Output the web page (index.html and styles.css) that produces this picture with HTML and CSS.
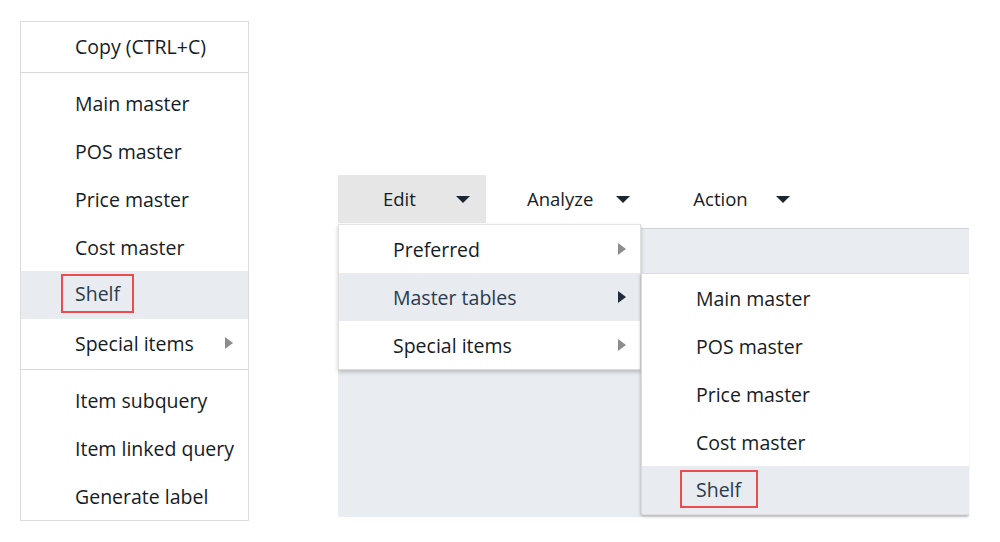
FILE: index.html
```html
<!DOCTYPE html>
<html lang="en">
<head>
<meta charset="utf-8">
<title>Menus</title>
<link rel="stylesheet" href="styles.css">
</head>
<body>
<div class="page">
  <ul class="ctx-menu">
    <li class="item">Copy (CTRL+C)</li>
    <li class="sep"></li>
    <li class="item">Main master</li>
    <li class="item">POS master</li>
    <li class="item">Price master</li>
    <li class="item">Cost master</li>
    <li class="item active"><span class="mark mark-left">Shelf</span></li>
    <li class="item has-sub">Special items<span class="arrow"></span></li>
    <li class="sep"></li>
    <li class="item">Item subquery</li>
    <li class="item">Item linked query</li>
    <li class="item">Generate label</li>
  </ul>

  <div class="app">
    <div class="toolbar">
      <div class="tb-item tb-edit"><span>Edit</span><span class="caret"></span></div>
      <div class="tb-item tb-analyze"><span>Analyze</span><span class="caret"></span></div>
      <div class="tb-item tb-action"><span>Action</span><span class="caret"></span></div>
    </div>
    <div class="panel"></div>

    <ul class="dropdown">
      <li class="item has-sub">Preferred<span class="arrow"></span></li>
      <li class="item has-sub active">Master tables<span class="arrow dark"></span></li>
      <li class="item has-sub">Special items<span class="arrow"></span></li>
    </ul>

    <ul class="submenu">
      <li class="item">Main master</li>
      <li class="item">POS master</li>
      <li class="item">Price master</li>
      <li class="item">Cost master</li>
      <li class="item active"><span class="mark mark-right">Shelf</span></li>
    </ul>
  </div>
</div>
</body>
</html>
```

FILE: styles.css
```css
* { box-sizing: border-box; }

html, body {
  margin: 0;
  padding: 0;
  background: #ffffff;
}

body {
  font-family: "Open Sans", "Noto Sans", "Liberation Sans", sans-serif;
  font-size: 19.5px;
  color: #151c26;
  width: 1000px;
  height: 542px;
  overflow: hidden;
}

ul { list-style: none; margin: 0; padding: 0; }

.page {
  display: flex;
  align-items: flex-start;
  padding: 21px 0 0 20px;
}

/* ---------- left context menu ---------- */
.ctx-menu {
  width: 229px;
  border: 1px solid #dcdcdc;
  background: #fff;
}

.item {
  height: 48px;
  display: flex;
  align-items: center;
  padding-left: 54px;
  white-space: nowrap;
}

.item.active {
  background: #e8ebef;
  color: #2a3a4c;
}

.ctx-menu .has-sub {
  justify-content: space-between;
  padding-right: 15px;
}

.sep {
  height: 1px;
  background: #d8d8d8;
  margin: 2px 0 6px;
}

.arrow {
  width: 0;
  height: 0;
  border-top: 6px solid transparent;
  border-bottom: 6px solid transparent;
  border-left: 8px solid #8c8c8c;
}
.arrow.dark { border-left-color: #1f2d3d; }

.mark {
  display: inline-flex;
  align-items: center;
  border: 2px solid #ea4c4f;
}
.mark-left {
  height: 39px;
  padding: 0 12px;
  margin-left: -14px;
  margin-top: -3px;
}
.mark-right {
  height: 38px;
  padding: 0 15px 0 14px;
  margin-left: -16px;
  margin-top: -2px;
}

/* ---------- app area ---------- */
.app {
  position: relative;
  margin-left: 89px;
  margin-top: 154px;
  width: 631px;
}

.toolbar {
  display: flex;
  height: 48px;
  align-items: stretch;
  font-size: 18.5px;
}

.tb-item {
  display: flex;
  align-items: center;
  padding-bottom: 1px;
}

.tb-edit {
  width: 148px;
  background: #e6e6e6;
  padding-left: 45px;
}
.tb-edit .caret { margin-left: 40px; }

.tb-analyze { padding-left: 41px; }
.tb-analyze .caret { margin-left: 23px; }

.tb-action { padding-left: 63px; }
.tb-action .caret { margin-left: 28px; }

.caret {
  width: 0;
  height: 0;
  border-left: 7px solid transparent;
  border-right: 7px solid transparent;
  border-top: 7px solid #1b2533;
  margin-top: 1px;
}

.panel {
  margin-top: 5px;
  height: 289px;
  background: #e9ecf0;
  border-top: 1px solid #d2d5d9;
}

.dropdown {
  position: absolute;
  top: 49px;
  left: 0;
  width: 303px;
  background: #fff;
  border: 1px solid #dedede;
  border-top-color: #e4e4e4;
  box-shadow: 0 2px 4px rgba(0, 0, 0, 0.22);
}
.dropdown .item {
  justify-content: space-between;
  padding-right: 14px;
  padding-left: 54px;
}

.submenu {
  position: absolute;
  top: 98px;
  left: 303px;
  width: 328px;
  background: #fff;
  border: 1px solid #dedede;
  border-right: none;
  border-radius: 0 0 0 4px;
  box-shadow: -1px 2px 3px rgba(0, 0, 0, 0.2);
}
.submenu .item { padding-left: 54px; }
```
